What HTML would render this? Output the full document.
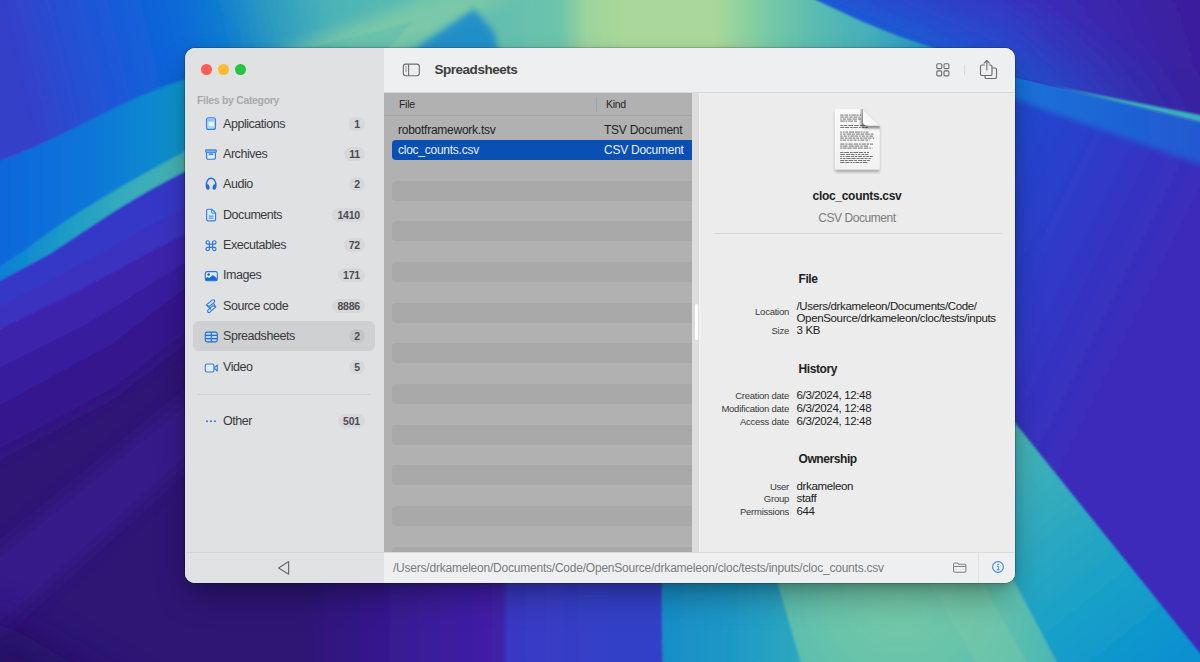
<!DOCTYPE html>
<html lang="en">
<head>
<meta charset="utf-8">
<title>Spreadsheets</title>
<style>
*{box-sizing:border-box;margin:0;padding:0}
html,body{width:1200px;height:662px;overflow:hidden;background:#2a1a7a}
body{font-family:"Liberation Sans",sans-serif;position:relative;color:#262626}
#wall{position:absolute;left:0;top:0;width:1200px;height:662px}
#win{position:absolute;left:185px;top:48px;width:830px;height:535px;border-radius:10px;overflow:hidden;background:#ececec}
#shadow{position:absolute;left:185px;top:48px;width:830px;height:535px;border-radius:10px;box-shadow:0 0 0 .6px rgba(0,0,0,.3),0 16px 34px -6px rgba(0,0,0,.36),0 3px 10px rgba(0,0,0,.14)}
#side{position:absolute;left:0;top:0;width:199px;height:535px;background:#e0e1e3}
#side .foot{position:absolute;left:0;top:504px;width:199px;height:31px;border-top:1px solid #d2d3d5;background:#e1e2e4}
.tl{position:absolute;top:16.1px;width:10.8px;height:10.8px;border-radius:50%}
.cap{position:absolute;left:12px;top:46px;font-size:10.5px;line-height:12px;font-weight:bold;color:#a9a9ab;letter-spacing:-.32px}
.it{position:absolute;left:8px;width:182px;height:30px;border-radius:6px}
.it.sel{background:#cfd0d2}
.it .lb{position:absolute;left:30px;top:7px;font-size:12.5px;line-height:16px;color:#3a3a3c;letter-spacing:-.45px}
.it .bd{position:absolute;right:10px;top:8px;height:14px;min-width:15px;padding:0 5px;border-radius:7px;background:#d7d8da;font-size:10.5px;line-height:14px;font-weight:bold;color:#4c4c4e;text-align:center;letter-spacing:-.2px}
.it.sel .bd{background:#c4c5c7}
.it svg{position:absolute;left:9px;top:5.5px;width:18px;height:18px;overflow:visible}
#side hr{position:absolute;left:13px;top:346px;width:172px;border:0;border-top:1px solid #d0d1d3}
#tbar{z-index:2;position:absolute;left:199px;top:0;width:631px;height:45px;background:#eeeff1;border-bottom:1px solid #d8d8da}
#tbar .ttl{position:absolute;left:50.5px;top:13px;font-size:13.5px;line-height:17px;font-weight:bold;color:#3d3d3d;letter-spacing:-.48px}
#tbl{position:absolute;left:199px;top:45px;width:308px;height:459px;background:#b1b1b1;overflow:hidden}
#tbl .hd{position:absolute;left:0;top:0;width:308px;height:23px;border-bottom:1px solid #a3a3a3;font-size:10.5px;color:#262626;letter-spacing:-.3px}
#tbl .hd span{position:absolute;top:5px;line-height:13px}
#tbl .hd i{position:absolute;left:212px;top:4px;width:1px;height:15px;background:#a2a2a2}
.st{position:absolute;left:8px;width:300px;height:20px;border-radius:4px 0 0 4px;background:#a9a9a9}
.rw{position:absolute;left:8px;width:300px;height:20px;border-radius:4px 0 0 4px;font-size:12px;line-height:20px;color:#1f1f1f;letter-spacing:-.25px}
.rw.sel{background:#0a4fb3;color:#e4eeff}
.rw span{position:absolute;top:0}
#split{position:absolute;left:507px;top:45px;width:8px;height:459px;background:#dddddd;border-right:1px solid #f2f2f2}
#split i{position:absolute;left:2.5px;top:211px;width:3px;height:36px;border-radius:1.5px;background:#fcfcfc}
#det{position:absolute;left:515px;top:44px;width:315px;height:460px;background:#ececec}
#det .nm{position:absolute;left:-1px;top:96px;width:316px;text-align:center;font-size:12px;font-weight:bold;color:#1e1e1e;line-height:16px;letter-spacing:-.3px}
#det .kd{position:absolute;left:-1px;top:118px;width:316px;text-align:center;font-size:12px;color:#7d7d7d;line-height:16px;letter-spacing:-.45px}
#det .ln{position:absolute;left:14px;top:141px;width:288px;height:1px;background:#d8d8d8}
#det h3{position:absolute;left:98.5px;font-size:12px;line-height:16px;font-weight:bold;color:#222;letter-spacing:-.42px}
#det .k{position:absolute;left:-1px;width:90px;text-align:right;font-size:9.5px;line-height:12px;color:#3a3a3a;letter-spacing:-.25px;white-space:nowrap}
#det .v{position:absolute;left:96.5px;font-size:11.5px;line-height:12px;color:#222;letter-spacing:-.35px;white-space:nowrap}
#bbar{position:absolute;left:199px;top:504px;width:631px;height:31px;background:#eeeff1;border-top:1px solid #dadbdd}
#bbar .p{position:absolute;left:9px;top:8px;font-size:12px;line-height:14px;color:#7c7c7c;letter-spacing:-.22px;white-space:nowrap}
#bbar .vs{position:absolute;left:594px;top:0;width:1px;height:31px;background:#e0e0e0}
</style>
</head>
<body>
<svg id="wall" viewBox="0 0 1200 662">
<defs>
<filter id="b1" x="-5%" y="-5%" width="110%" height="110%"><feGaussianBlur stdDeviation="1"/></filter>
<filter id="b3" x="-10%" y="-10%" width="120%" height="120%"><feGaussianBlur stdDeviation="3"/></filter>
<filter id="b8" x="-20%" y="-20%" width="140%" height="140%"><feGaussianBlur stdDeviation="8"/></filter>
<filter id="b20" x="-30%" y="-30%" width="160%" height="160%"><feGaussianBlur stdDeviation="20"/></filter>
<linearGradient id="gTopL" x1="0" y1="60" x2="420" y2="-40" gradientUnits="userSpaceOnUse"><stop offset="0" stop-color="#3640c8"/><stop offset=".06" stop-color="#3242ca"/><stop offset=".13" stop-color="#2a4cd0"/><stop offset=".25" stop-color="#1c58d8"/><stop offset=".42" stop-color="#0a68d8"/><stop offset=".52" stop-color="#107cd0"/><stop offset=".62" stop-color="#2a98c2"/><stop offset=".78" stop-color="#4cb4b6"/><stop offset="1" stop-color="#5cbcb2"/></linearGradient>
<linearGradient id="gLB" x1="0" y1="0" x2="200" y2="0" gradientUnits="userSpaceOnUse"><stop offset="0" stop-color="#0e68dc"/><stop offset=".45" stop-color="#0876d8"/><stop offset=".8" stop-color="#0a8cce"/><stop offset="1" stop-color="#0c9cc6"/></linearGradient>
<linearGradient id="gTeal" x1="0" y1="0" x2="200" y2="0" gradientUnits="userSpaceOnUse">
<stop offset="0" stop-color="#0a80d4"/><stop offset=".3" stop-color="#1a9ac8"/><stop offset=".6" stop-color="#34aabc"/><stop offset="1" stop-color="#4cb4b0"/></linearGradient>
<linearGradient id="gTopFan" x1="380" y1="0" x2="940" y2="0" gradientUnits="userSpaceOnUse"><stop offset="0" stop-color="#4ab2b8"/><stop offset=".2" stop-color="#62beb0"/><stop offset=".32" stop-color="#6cc4aa"/><stop offset=".37" stop-color="#9cd49c"/><stop offset=".43" stop-color="#a9d89a"/><stop offset=".6" stop-color="#a9d89a"/><stop offset=".65" stop-color="#8ed0a0"/><stop offset=".7" stop-color="#74c8a8"/><stop offset=".8" stop-color="#54b8b4"/><stop offset=".88" stop-color="#44aebb"/><stop offset="1" stop-color="#2090c8"/></linearGradient>
<linearGradient id="gRight" x1="1015" y1="150" x2="1183" y2="234" gradientUnits="userSpaceOnUse"><stop offset="0" stop-color="#2446d0"/><stop offset=".25" stop-color="#2a40cc"/><stop offset=".5" stop-color="#3138c7"/><stop offset=".7" stop-color="#3632c2"/><stop offset="1" stop-color="#3c2cba"/></linearGradient>
<linearGradient id="gRT" x1="900" y1="40" x2="990" y2="-170" gradientUnits="userSpaceOnUse">
<stop offset="0" stop-color="#1c5cd6"/><stop offset=".15" stop-color="#284acd"/><stop offset=".4" stop-color="#3a30c0"/><stop offset="1" stop-color="#3c1fa4"/></linearGradient>
<linearGradient id="gRT2" x1="1000" y1="0" x2="1200" y2="0" gradientUnits="userSpaceOnUse">
<stop offset="0" stop-color="#3c1f9c" stop-opacity="0"/><stop offset="1" stop-color="#3a1c98" stop-opacity=".85"/></linearGradient>
<linearGradient id="gBand" x1="1000" y1="0" x2="1200" y2="0" gradientUnits="userSpaceOnUse">
<stop offset="0" stop-color="#1874da"/><stop offset="1" stop-color="#2258d2"/></linearGradient>
<linearGradient id="gBot" x1="640" y1="0" x2="1200" y2="0" gradientUnits="userSpaceOnUse">
<stop offset="0" stop-color="#1486cc"/><stop offset=".1" stop-color="#1c96c6"/><stop offset=".22" stop-color="#30a8c0"/><stop offset=".27" stop-color="#58bcb2"/><stop offset=".45" stop-color="#66c2ac"/><stop offset=".55" stop-color="#74c8a6"/><stop offset=".64" stop-color="#50b8b6"/><stop offset=".8" stop-color="#1c9ccc"/><stop offset="1" stop-color="#088ad4"/></linearGradient>
<linearGradient id="gBotL" x1="300" y1="0" x2="664" y2="0" gradientUnits="userSpaceOnUse"><stop offset="0" stop-color="#2d1375"/><stop offset=".22" stop-color="#36198e"/><stop offset=".45" stop-color="#3e1fa4"/><stop offset=".553" stop-color="#4120a8"/><stop offset=".572" stop-color="#3a38c4"/><stop offset=".8" stop-color="#3540c8"/><stop offset="1" stop-color="#3042c8"/></linearGradient>
<linearGradient id="gDark" x1="0" y1="662" x2="300" y2="440" gradientUnits="userSpaceOnUse"><stop offset="0" stop-color="#250f68"/><stop offset=".5" stop-color="#2b1274"/><stop offset="1" stop-color="#2e147a"/></linearGradient>
<radialGradient id="gFan" cx="900" cy="600" r="340" gradientUnits="userSpaceOnUse">
<stop offset="0" stop-color="#74c8a8"/><stop offset=".2" stop-color="#6ac4aa"/><stop offset=".36" stop-color="#5abeb0"/><stop offset=".56" stop-color="#42b2b8"/><stop offset=".76" stop-color="#1e9ecb"/><stop offset="1" stop-color="#0a8ad4"/></radialGradient>
<linearGradient id="gBlueTeal" x1="662" y1="0" x2="800" y2="0" gradientUnits="userSpaceOnUse">
<stop offset="0" stop-color="#188ec8"/><stop offset=".5" stop-color="#1e98c6"/><stop offset="1" stop-color="#2ea8c0"/></linearGradient>
<clipPath id="cBand"><path d="M1000,72.500 L1015,77.500 L1210,124.500 L1210,300 L1000,300 Z"/></clipPath>
<linearGradient id="gFanR" x1="1015" y1="430" x2="1189" y2="648" gradientUnits="userSpaceOnUse"><stop offset="0" stop-color="#48b4b4"/><stop offset=".35" stop-color="#2ea9c0"/><stop offset=".66" stop-color="#18a0c8"/><stop offset="1" stop-color="#0a90d0"/></linearGradient>
<clipPath id="cDark"><path d="M-10,411 L111,345 L186,288 L420,120 L420,700 L-10,700 Z"/></clipPath>
</defs>
<rect width="1200" height="662" fill="#2d1375"/>
<!-- left/top blue field -->
<g filter="url(#b1)">
<path d="M-10,-10 L900,-10 L900,300 L-10,440 Z" fill="url(#gTopL)"/>
<path d="M-10,164 C60,142 120,98 190,78 L420,20 L420,300 L-10,300 Z" fill="url(#gLB)"/>
<path d="M-10,272 L24,251 C60,222 120,186 186,151 L420,40 L420,120 L186,171 C160,184 135,198 111,213.500 C90,227 70,241 48,255 L-10,286 Z" fill="url(#gTeal)"/>
<path d="M-10,286 L48,255 C70,241 90,227 111,213.500 C135,198 160,184 186,171 L420,60 L420,400 L-10,400 Z" fill="#3638c6"/>
<path d="M-10,312 L60,276 L186,206 L420,90 L420,400 L-10,400 Z" fill="#3a30c0"/>
<path d="M-10,334 L71,295 L174,240 L420,110 L420,500 L-10,500 Z" fill="#3c24ac"/>
<path d="M-10,372 L90,322 L186,262 L420,110 L420,500 L-10,500 Z" fill="#391e9e"/>
<path d="M-10,411 L111,345 L186,288 L420,120 L420,700 L-10,700 Z" fill="#2d1375"/>
</g>
<g clip-path="url(#cDark)"><path d="M-30,395 L111,325 L186,268 L420,100 L420,190 L186,338 L111,395 L-30,470 Z" fill="#36188e" filter="url(#b8)"/></g>
<path d="M200,385 L200,452 L-20,650 L-20,565 Z" fill="#371b90" opacity=".75" filter="url(#b8)"/>
<path d="M-20,610 L170,720 L-20,720 Z" fill="#221060" opacity=".8" filter="url(#b20)"/>
<!-- top fan -->
<g filter="url(#b1)">
<path d="M370,70 L440,-10 L830,-10 C870,25 940,48 1015,77 L1015,120 L370,120 Z" fill="url(#gTopFan)"/>
</g>
<path d="M270,56 L400,56 L520,-8 L440,-8 Z" fill="#84cca6" opacity=".8" filter="url(#b8)"/>
<path d="M402,58 L500,58 L494,32 L474,9 Z" fill="#1f8ccb" opacity=".9" filter="url(#b3)"/>
<!-- right side -->
<g filter="url(#b1)">
<path d="M800,-10 L816,0 C850,16 885,33 927,45.500 C960,56 990,68 1015,77 L1210,124 L1210,-10 Z" fill="url(#gRT)"/>
<path d="M1000,-10 H1210 V130 H1000 Z" fill="url(#gRT2)"/>
<path d="M1000,72 L1015,77 L1210,124 L1210,700 L1000,700 Z" fill="url(#gRight)"/>

</g>
<g clip-path="url(#cBand)"><g filter="url(#b3)"><path d="M990,66 L1015,72 L1215,121 L1215,170 L1015,99 L990,90 Z" fill="url(#gBand)"/></g></g>
<g filter="url(#b1)"><path d="M1050,85.500 L1210,124.500 L1210,117 Z" fill="#38b0c0"/></g>
<!-- bottom -->
<g filter="url(#b1)">
<path d="M300,560 L664,560 L662,700 L300,700 Z" fill="url(#gBotL)"/>
<path d="M662,560 L830,190 L1015,423 L1210,666 L1210,700 L663,700 Z" fill="url(#gFan)"/>
<path d="M662,560 L770,560 L777.600,583 L812,700 L663,700 Z" fill="url(#gBlueTeal)"/>
<path d="M1015,423 L1210,666 L1210,700 L1077,700 L1015,583 L1000,555 L1000,404 Z" fill="url(#gFanR)"/>
<path d="M929,583 L976,662 L1000,700 L1050,700 L1027,662 L990,597 L975,560 L915,560 Z" fill="#7ccaa6" opacity=".45"/>
</g>
</svg>

<div id="shadow"></div>
<div id="win">
  <div id="side">
    <div class="tl" style="left:16.2px;background:#fd5d57"></div>
    <div class="tl" style="left:33.2px;background:#fdbc2e"></div>
    <div class="tl" style="left:50.2px;background:#27c53f"></div>
    <div class="cap">Files by Category</div>
    <div class="it" style="top:61px"><svg viewBox="0 0 18 18"><rect x="4.5" y="2.8" width="9" height="11.6" rx="2" fill="#b4d6f8" stroke="#3682e2" stroke-width="1.1"/><rect x="5.1" y="3.4" width="7.8" height="2.6" rx="1" fill="#8fc2f4"/><rect x="6.9" y="7.3" width="5" height="3.6" fill="#f3f8fd"/></svg><span class="lb">Applications</span><span class="bd">1</span></div>
    <div class="it" style="top:91px"><svg viewBox="0 0 18 18"><rect x="4.5" y="6.6" width="9" height="7.6" rx="1.2" fill="#bcdaf9" stroke="#3682e2" stroke-width="1.1"/><rect x="3.7" y="4.9" width="10.6" height="2.3" rx=".8" fill="#8fc2f4" stroke="#3682e2" stroke-width="1.1"/><rect x="7" y="8.6" width="4" height="1.2" rx=".6" fill="#1f6bd8"/><rect x="6.2" y="10.800" width="5.6" height="2.300" fill="#eef5fd"/></svg><span class="lb">Archives</span><span class="bd">11</span></div>
    <div class="it" style="top:121px"><svg viewBox="0 0 18 18"><path d="M4.4,11.2 C4,6 6.2,3.3 9.1,3.3 C12,3.3 14.2,6 13.8,11.2" fill="none" stroke="#2a72d6" stroke-width="1.45"/><ellipse cx="5.7" cy="12" rx="1.85" ry="2.75" transform="rotate(-14 5.7 12)" fill="#1f6bd8"/><ellipse cx="12.5" cy="12" rx="1.85" ry="2.75" transform="rotate(14 12.5 12)" fill="#1f6bd8"/></svg><span class="lb">Audio</span><span class="bd">2</span></div>
    <div class="it" style="top:152px"><svg viewBox="0 0 18 18"><path d="M6,3.2 H9.8 L13.6,7 V13.4 Q13.6,14.8 12.2,14.8 H6 Q4.6,14.8 4.6,13.4 V4.6 Q4.6,3.2 6,3.2 Z" fill="#d4e8fb" stroke="#3682e2" stroke-width="1.15" stroke-linejoin="round"/><path d="M9.6,3.4 V6.2 Q9.6,7.2 10.6,7.2 H13.4" fill="none" stroke="#3682e2" stroke-width="1"/><path d="M6.8,10.1 H11.3 M6.8,12.1 H11.3" stroke="#3682e2" stroke-width="1"/></svg><span class="lb">Documents</span><span class="bd">1410</span></div>
    <div class="it" style="top:182px"><svg viewBox="0 0 18 18"><path d="M7.4 8.1 H5.7 a1.7 1.7 0 1 1 1.7 -1.7 V13 a1.7 1.7 0 1 1 -1.7 -1.7 H12.3 a1.7 1.7 0 1 1 -1.7 1.7 V6.4 a1.7 1.7 0 1 1 1.7 1.7 Z" fill="none" stroke="#2f78d4" stroke-width="1.15"/></svg><span class="lb">Executables</span><span class="bd">72</span></div>
    <div class="it" style="top:212px"><svg viewBox="0 0 18 18"><rect x="3.3" y="5.6" width="12" height="9.1" rx="1.8" fill="#ddeefc" stroke="#2a72d8" stroke-width="1.1"/><path d="M3.6,12.4 L5.6,11 L7.3,12 L10.2,9.4 Q10.9,8.9 11.6,9.4 L15,12.4 V13.2 Q15,14.4 13.8,14.4 H4.8 Q3.6,14.4 3.6,13.2 Z" fill="#0f6be6"/><circle cx="6.6" cy="8.6" r="1.25" fill="#1a5cc8"/></svg><span class="lb">Images</span><span class="bd">171</span></div>
    <div class="it" style="top:243px"><svg viewBox="0 0 18 18"><g fill="#d6e9fc" stroke="#2f78d8" stroke-width="1.1" stroke-linejoin="round"><path d="M4.300,7.900 L10.300,3.100 Q11.700,2.200 12.500,3.400 Q13.100,4.600 11.900,5.700 L7.300,9.500 Z"/><path d="M13.800,9.900 L7.900,15.200 Q6.600,16.100 5.800,14.900 Q5.200,13.700 6.400,12.700 L10.800,8.700 Z"/><path d="M4.300,7.900 L9.200,12.700 M11.300,6.200 L13.800,9.900" fill="none"/></g></svg><span class="lb">Source code</span><span class="bd">8886</span></div>
    <div class="it sel" style="top:273px"><svg viewBox="0 0 18 18"><rect x="3.3" y="5.1" width="12" height="9.8" rx="1.8" fill="#b8dafa" stroke="#2a6ccc" stroke-width="1.1"/><path d="M3.3,8.4 H15.3 M3.3,11.6 H15.3 M9.3,5.1 V14.9" stroke="#2a6ccc" stroke-width="1.1"/></svg><span class="lb">Spreadsheets</span><span class="bd">2</span></div>
    <div class="it" style="top:304px"><svg viewBox="0 0 18 18"><rect x="3.3" y="6" width="8.6" height="8" rx="1.8" fill="#ddeefc" stroke="#3a7cd2" stroke-width="1.1"/><path d="M12.9,9.1 L15.3,7 V13 L12.9,10.9 Z" fill="#cfe5fb" stroke="#3a7cd2" stroke-width="1.1" stroke-linejoin="round"/></svg><span class="lb">Video</span><span class="bd">5</span></div>
    <hr>
    <div class="it" style="top:358px"><svg viewBox="0 0 18 18"><circle cx="5" cy="9.2" r="1.05" fill="#2f7be0"/><circle cx="9" cy="9.2" r="1.05" fill="#2f7be0"/><circle cx="12.9" cy="9.2" r="1.05" fill="#2f7be0"/></svg><span class="lb">Other</span><span class="bd">501</span></div>
    <div class="foot"><svg style="position:absolute;left:0;top:-1px;width:199px;height:31px" viewBox="0 0 199 31"><path d="M103.6,9.6 L93.6,15.9 L103.6,22.2 Z" fill="none" stroke="#6a6a6a" stroke-width="1.15" stroke-linejoin="round"/></svg></div>
  </div>
  <div id="tbar"><svg style="position:absolute;left:0;top:0;width:631px;height:44px" viewBox="0 0 631 44">
<rect x="19.3" y="16.1" width="16" height="11.6" rx="2.4" fill="none" stroke="#6f6f6f" stroke-width="1.15"/>
<path d="M24.6,16.1 V27.7" stroke="#6f6f6f" stroke-width="1.1"/>
<path d="M21.2,19 H22.8 M21.2,21 H22.8 M21.2,23 H22.8" stroke="#6f6f6f" stroke-width=".9"/>
<g fill="none" stroke="#6f6f6f" stroke-width="1.15">
<rect x="552.8" y="15.7" width="4.9" height="4.9" rx="1.1"/><rect x="560" y="15.7" width="4.9" height="4.9" rx="1.1"/>
<rect x="552.8" y="22.9" width="4.9" height="4.9" rx="1.1"/><rect x="560" y="22.9" width="4.9" height="4.9" rx="1.1"/>
</g>
<rect x="580" y="17" width="1" height="10" fill="#dadada"/>
<g fill="none" stroke="#6f6f6f" stroke-width="1.15" stroke-linecap="round" stroke-linejoin="round">
<path d="M608,20 H610.9 Q612.5,20 612.5,21.6 V28.9 Q612.5,30.5 610.9,30.5 H602.6 Q601,30.5 601,28.9 V27.6"/>
<path d="M600.4,17 H598.1 Q596.5,17 596.5,18.6 V25.9 Q596.5,27.500 598.1,27.500 H606.4 Q608,27.500 608,25.9 V18.6 Q608,17 606.4,17 H605.2"/>
<path d="M602.8,12.700 V22 M600.2,15.100 L602.8,12.500 L605.4,15.100"/>
</g>
</svg><span class="ttl">Spreadsheets</span></div>
  <div id="tbl">
    <div class="st" style="top:87.5px"></div><div class="st" style="top:128.2px"></div><div class="st" style="top:168.9px"></div><div class="st" style="top:209.6px"></div><div class="st" style="top:250.3px"></div><div class="st" style="top:291px"></div><div class="st" style="top:331.7px"></div><div class="st" style="top:372.4px"></div><div class="st" style="top:413.1px"></div><div class="st" style="top:453.8px"></div>
    <div class="hd"><span style="left:15px">File</span><i></i><span style="left:222px">Kind</span></div>
    <div class="rw" style="top:27px"><span style="left:6px">robotframework.tsv</span><span style="left:212px">TSV Document</span></div>
    <div class="rw sel" style="top:47px"><span style="left:6px">cloc_counts.csv</span><span style="left:212px">CSV Document</span></div>
  </div>
  <div id="split"><i></i></div>
  <div id="det">
    <svg style="position:absolute;left:0;top:0;width:315px;height:100px;overflow:visible" viewBox="0 0 315 100">
<defs><linearGradient id="pg" x1="0" y1="0" x2="0" y2="1"><stop offset="0" stop-color="#f9f9f9"/><stop offset="1" stop-color="#f2f2f2"/></linearGradient>
<linearGradient id="fg" x1="0" y1="1" x2="1" y2="0"><stop offset="0" stop-color="#ffffff"/><stop offset=".5" stop-color="#f4f4f4"/><stop offset="1" stop-color="#e2e2e2"/></linearGradient>
<filter id="ds" x="-20%" y="-20%" width="140%" height="150%"><feGaussianBlur stdDeviation="1.5"/></filter>
<filter id="fs" x="-40%" y="-40%" width="180%" height="180%"><feGaussianBlur stdDeviation="1.3"/></filter>
<clipPath id="pc"><path d="M134.7,17 H163 L179.8,33.8 V78 H134.7 Z"/></clipPath></defs>
<path d="M135.200,18 H163 L179.3,34 V78.5 H135.200 Z" fill="#000" opacity=".32" filter="url(#ds)" transform="translate(0,1.6)"/>
<path d="M134.7,17 H163 L179.8,33.8 V78 H134.7 Z" fill="url(#pg)"/>
<path d="M134.7,77.200 H179.8 V78.300 H134.7 Z" fill="#d4d4d4"/>
<g fill="#3c3c3c" opacity=".72"><rect x="140.2" y="22.6" width="3.4" height="0.95"/><rect x="144.4" y="22.6" width="3.6" height="0.95"/><rect x="148.9" y="22.6" width="1.7" height="0.95"/><rect x="151.3" y="22.6" width="4.4" height="0.95"/><rect x="156.4" y="22.6" width="2.3" height="0.95"/><rect x="159.8" y="22.6" width="1.2" height="0.95"/><rect x="140.2" y="24.6" width="3.7" height="0.95"/><rect x="144.6" y="24.6" width="3.7" height="0.95"/><rect x="149.4" y="24.6" width="3.3" height="0.95"/><rect x="153.7" y="24.6" width="3.8" height="0.95"/><rect x="158.2" y="24.6" width="1.5" height="0.95"/><rect x="140.2" y="26.6" width="1.6" height="0.95"/><rect x="142.8" y="26.6" width="3.2" height="0.95"/><rect x="147.0" y="26.6" width="4.6" height="0.95"/><rect x="152.5" y="26.6" width="4.7" height="0.95"/><rect x="158.0" y="26.6" width="2.7" height="0.95"/><rect x="140.2" y="28.6" width="4.6" height="0.95"/><rect x="145.4" y="28.6" width="2.0" height="0.95"/><rect x="148.1" y="28.6" width="4.9" height="0.95"/><rect x="153.8" y="28.6" width="3.1" height="0.95"/><rect x="140.2" y="33.0" width="2.9" height="0.95"/><rect x="143.8" y="33.0" width="3.5" height="0.95"/><rect x="148.3" y="33.0" width="4.7" height="0.95"/><rect x="153.9" y="33.0" width="4.8" height="0.95"/><rect x="159.7" y="33.0" width="5.0" height="0.95"/><rect x="165.6" y="33.0" width="2.1" height="0.95"/><rect x="140.2" y="35.0" width="4.0" height="0.95"/><rect x="144.9" y="35.0" width="4.4" height="0.95"/><rect x="150.2" y="35.0" width="2.5" height="0.95"/><rect x="153.3" y="35.0" width="4.5" height="0.95"/><rect x="158.9" y="35.0" width="1.8" height="0.95"/><rect x="161.7" y="35.0" width="2.9" height="0.95"/><rect x="165.3" y="35.0" width="2.5" height="0.95"/><rect x="140.2" y="39.6" width="1.7" height="0.95"/><rect x="142.8" y="39.6" width="1.7" height="0.95"/><rect x="145.4" y="39.6" width="2.7" height="0.95"/><rect x="149.1" y="39.6" width="4.9" height="0.95"/><rect x="154.9" y="39.6" width="5.0" height="0.95"/><rect x="160.6" y="39.6" width="1.8" height="0.95"/><rect x="163.3" y="39.6" width="1.6" height="0.95"/><rect x="165.6" y="39.6" width="2.9" height="0.95"/><rect x="140.2" y="41.6" width="1.6" height="0.95"/><rect x="142.9" y="41.6" width="2.6" height="0.95"/><rect x="146.6" y="41.6" width="4.6" height="0.95"/><rect x="152.0" y="41.6" width="3.1" height="0.95"/><rect x="156.0" y="41.6" width="3.8" height="0.95"/><rect x="160.6" y="41.6" width="3.5" height="0.95"/><rect x="165.0" y="41.6" width="4.8" height="0.95"/><rect x="170.6" y="41.6" width="2.9" height="0.95"/><rect x="140.2" y="43.6" width="2.6" height="0.95"/><rect x="143.8" y="43.6" width="3.3" height="0.95"/><rect x="148.0" y="43.6" width="1.5" height="0.95"/><rect x="150.4" y="43.6" width="3.5" height="0.95"/><rect x="154.5" y="43.6" width="3.7" height="0.95"/><rect x="159.1" y="43.6" width="1.7" height="0.95"/><rect x="161.7" y="43.6" width="3.1" height="0.95"/><rect x="165.8" y="43.6" width="2.7" height="0.95"/><rect x="169.5" y="43.6" width="3.6" height="0.95"/><rect x="140.2" y="45.6" width="3.9" height="0.95"/><rect x="145.1" y="45.6" width="2.4" height="0.95"/><rect x="148.4" y="45.6" width="3.6" height="0.95"/><rect x="152.7" y="45.6" width="2.8" height="0.95"/><rect x="156.2" y="45.6" width="2.8" height="0.95"/><rect x="159.9" y="45.6" width="2.6" height="0.95"/><rect x="163.2" y="45.6" width="4.2" height="0.95"/><rect x="168.1" y="45.6" width="3.5" height="0.95"/><rect x="172.5" y="45.6" width="1.6" height="0.95"/><rect x="140.2" y="47.6" width="2.3" height="0.95"/><rect x="143.2" y="47.6" width="3.0" height="0.95"/><rect x="147.2" y="47.6" width="1.9" height="0.95"/><rect x="149.8" y="47.6" width="2.7" height="0.95"/><rect x="153.5" y="47.6" width="3.0" height="0.95"/><rect x="157.6" y="47.6" width="2.1" height="0.95"/><rect x="160.4" y="47.6" width="3.8" height="0.95"/><rect x="165.2" y="47.6" width="3.1" height="0.95"/><rect x="169.0" y="47.6" width="0.6" height="0.95"/><rect x="140.2" y="51.6" width="4.3" height="0.95"/><rect x="145.5" y="51.6" width="2.1" height="0.95"/><rect x="148.4" y="51.6" width="4.3" height="0.95"/><rect x="153.7" y="51.6" width="4.3" height="0.95"/><rect x="158.8" y="51.6" width="2.0" height="0.95"/><rect x="161.5" y="51.6" width="4.3" height="0.95"/><rect x="166.5" y="51.6" width="2.7" height="0.95"/><rect x="170.0" y="51.6" width="3.0" height="0.95"/><rect x="140.2" y="53.6" width="2.0" height="0.95"/><rect x="142.8" y="53.6" width="4.8" height="0.95"/><rect x="148.7" y="53.6" width="5.0" height="0.95"/><rect x="154.5" y="53.6" width="4.8" height="0.95"/><rect x="160.4" y="53.6" width="2.3" height="0.95"/><rect x="163.6" y="53.6" width="4.4" height="0.95"/><rect x="140.2" y="55.6" width="2.3" height="0.95"/><rect x="143.1" y="55.6" width="3.6" height="0.95"/><rect x="147.4" y="55.6" width="4.3" height="0.95"/><rect x="152.4" y="55.6" width="4.7" height="0.95"/><rect x="158.0" y="55.6" width="4.7" height="0.95"/><rect x="163.8" y="55.6" width="4.6" height="0.95"/><rect x="169.3" y="55.6" width="1.5" height="0.95"/><rect x="171.8" y="55.6" width="0.6" height="0.95"/><rect x="140.2" y="60.0" width="3.3" height="0.95"/><rect x="144.3" y="60.0" width="4.8" height="0.95"/><rect x="150.0" y="60.0" width="2.7" height="0.95"/><rect x="153.5" y="60.0" width="4.5" height="0.95"/><rect x="158.8" y="60.0" width="4.2" height="0.95"/><rect x="163.8" y="60.0" width="2.2" height="0.95"/><rect x="166.9" y="60.0" width="2.1" height="0.95"/><rect x="140.2" y="62.0" width="4.7" height="0.95"/><rect x="145.9" y="62.0" width="4.4" height="0.95"/><rect x="150.9" y="62.0" width="3.7" height="0.95"/><rect x="155.6" y="62.0" width="1.7" height="0.95"/><rect x="158.1" y="62.0" width="2.4" height="0.95"/><rect x="161.4" y="62.0" width="3.0" height="0.95"/><rect x="165.2" y="62.0" width="3.1" height="0.95"/><rect x="140.2" y="64.0" width="1.9" height="0.95"/><rect x="142.8" y="64.0" width="1.7" height="0.95"/><rect x="145.6" y="64.0" width="4.5" height="0.95"/><rect x="150.8" y="64.0" width="3.3" height="0.95"/><rect x="154.8" y="64.0" width="2.6" height="0.95"/><rect x="158.2" y="64.0" width="3.8" height="0.95"/><rect x="162.8" y="64.0" width="2.8" height="0.95"/><rect x="166.3" y="64.0" width="2.7" height="0.95"/><rect x="169.6" y="64.0" width="3.1" height="0.95"/><rect x="140.2" y="66.0" width="1.8" height="0.95"/><rect x="142.7" y="66.0" width="2.8" height="0.95"/><rect x="146.4" y="66.0" width="4.2" height="0.95"/><rect x="151.4" y="66.0" width="4.3" height="0.95"/><rect x="156.6" y="66.0" width="3.0" height="0.95"/><rect x="160.4" y="66.0" width="3.2" height="0.95"/><rect x="164.6" y="66.0" width="3.0" height="0.95"/><rect x="168.5" y="66.0" width="2.2" height="0.95"/><rect x="140.2" y="68.0" width="3.9" height="0.95"/><rect x="144.8" y="68.0" width="3.0" height="0.95"/><rect x="148.6" y="68.0" width="4.6" height="0.95"/><rect x="154.2" y="68.0" width="2.8" height="0.95"/><rect x="158.1" y="68.0" width="4.3" height="0.95"/><rect x="163.1" y="68.0" width="3.1" height="0.95"/><rect x="166.9" y="68.0" width="2.9" height="0.95"/><rect x="140.2" y="70.0" width="4.3" height="0.95"/><rect x="145.4" y="70.0" width="4.1" height="0.95"/><rect x="150.4" y="70.0" width="1.9" height="0.95"/><rect x="153.1" y="70.0" width="1.5" height="0.95"/><rect x="155.3" y="70.0" width="4.2" height="0.95"/><rect x="160.1" y="70.0" width="1.8" height="0.95"/><rect x="162.6" y="70.0" width="4.6" height="0.95"/></g>
<g clip-path="url(#pc)"><path d="M161.500,15 L181,34.500 L181,36.500 H166 Q160.500,36.500 160.500,31 Z" fill="#000" opacity=".42" filter="url(#fs)"/></g>
<path d="M163,17 L179.8,33.8 H167.500 Q163,33.8 163,29.300 Z" fill="url(#fg)"/>
</svg>
    <div class="nm">cloc_counts.csv</div>
    <div class="kd">CSV Document</div>
    <div class="ln"></div>
    <h3 style="top:178.5px">File</h3>
    <div class="k" style="top:213.5px">Location</div><div class="v" style="top:208px">/Users/drkameleon/Documents/Code/<br>OpenSource/drkameleon/cloc/tests/inputs</div>
    <div class="k" style="top:232.7px">Size</div><div class="v" style="top:232px">3 KB</div>
    <h3 style="top:268.5px">History</h3>
    <div class="k" style="top:297.6px">Creation date</div><div class="v" style="top:297px">6/3/2024, 12:48</div>
    <div class="k" style="top:311px">Modification date</div><div class="v" style="top:310px">6/3/2024, 12:48</div>
    <div class="k" style="top:323.5px">Access date</div><div class="v" style="top:322.5px">6/3/2024, 12:48</div>
    <h3 style="top:359.3px">Ownership</h3>
    <div class="k" style="top:388.7px">User</div><div class="v" style="top:388px">drkameleon</div>
    <div class="k" style="top:401.3px">Group</div><div class="v" style="top:400.4px">staff</div>
    <div class="k" style="top:414px">Permissions</div><div class="v" style="top:413px">644</div>
  </div>
  <div id="bbar"><i class="vs"></i><svg style="position:absolute;left:0;top:-1.8px;width:631px;height:31px" viewBox="0 0 631 31">
<path d="M569.6,13.2 Q569.6,11.9 570.9,11.9 H573.4 L574.8,13.3 H580.6 Q581.9,13.3 581.9,14.6 V19.9 Q581.9,21.2 580.6,21.2 H570.9 Q569.6,21.2 569.6,19.9 Z M569.6,15.4 H581.9" fill="none" stroke="#808080" stroke-width="1.05" stroke-linejoin="round"/>
<circle cx="614" cy="16" r="5.4" fill="none" stroke="#3b8be6" stroke-width="1.1"/>
<circle cx="614" cy="13.5" r=".85" fill="#3b8be6"/><path d="M613.2,15.4 H614.4 V18.8 M612.8,18.8 H615.6" fill="none" stroke="#3b8be6" stroke-width=".95"/>
</svg><span class="p">/Users/drkameleon/Documents/Code/OpenSource/drkameleon/cloc/tests/inputs/cloc_counts.csv</span></div>
</div>
</body>
</html>
